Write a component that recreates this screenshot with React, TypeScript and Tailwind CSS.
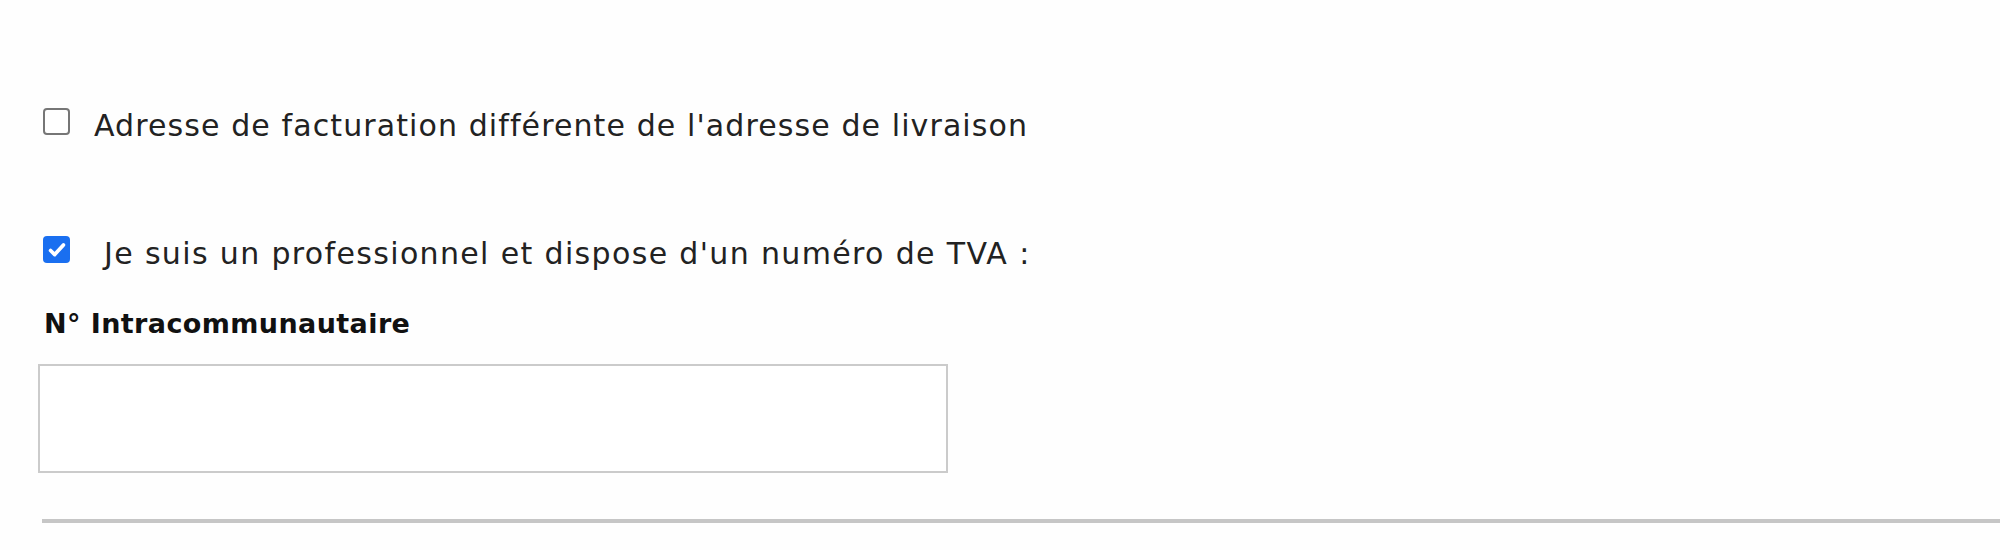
import React from "react";

function Box({ checked }: { checked?: boolean }) {
  if (checked) {
    return (
      <span className="flex h-[27px] w-[27px] shrink-0 items-center justify-center rounded-[4px] bg-[#1a6ff0]">
        <svg viewBox="0 0 24 24" className="h-[22px] w-[22px]" fill="none" stroke="white" strokeWidth="4" strokeLinecap="round" strokeLinejoin="round">
          <path d="M5 12.5l4.5 4.5L19 6.5" />
        </svg>
      </span>
    );
  }
  return <span className="block h-[27px] w-[27px] shrink-0 rounded-[4px] border-2 border-[#767676] bg-white" />;
}

export default function App() {
  return (
    <div className="h-[550px] w-[2000px] overflow-hidden bg-[#fefefe] font-['DejaVu_Sans',Verdana,sans-serif] text-[#222]">
      <div className="pt-[108px]">
        <label className="flex h-[36px] items-start pl-[43px]">
          <Box />
          <span className="ml-[24px] text-[30px] leading-[36px] tracking-[1.1px]">
            Adresse de facturation différente de l'adresse de livraison
          </span>
        </label>

        <label className="mt-[92px] flex h-[36px] items-start pl-[43px]">
          <Box checked />
          <span className="ml-[34px] text-[30px] leading-[36px] tracking-[1.35px]">
            Je suis un professionnel et dispose d'un numéro de TVA :
          </span>
        </label>

        <div className="mt-[35px] pl-[44px] text-[27px] font-bold leading-[34px] tracking-[0.4px] text-[#111]">
          N° Intracommunautaire
        </div>

        <div className="mt-[23px] pl-[38px]">
          <input type="text" className="block h-[109px] w-[910px] border-2 border-[#cbcbcb] bg-white outline-none" />
        </div>

        <hr className="ml-[42px] mt-[46px] border-0 border-t-[4px] border-[#c6c6c6]" />
      </div>
    </div>
  );
}
